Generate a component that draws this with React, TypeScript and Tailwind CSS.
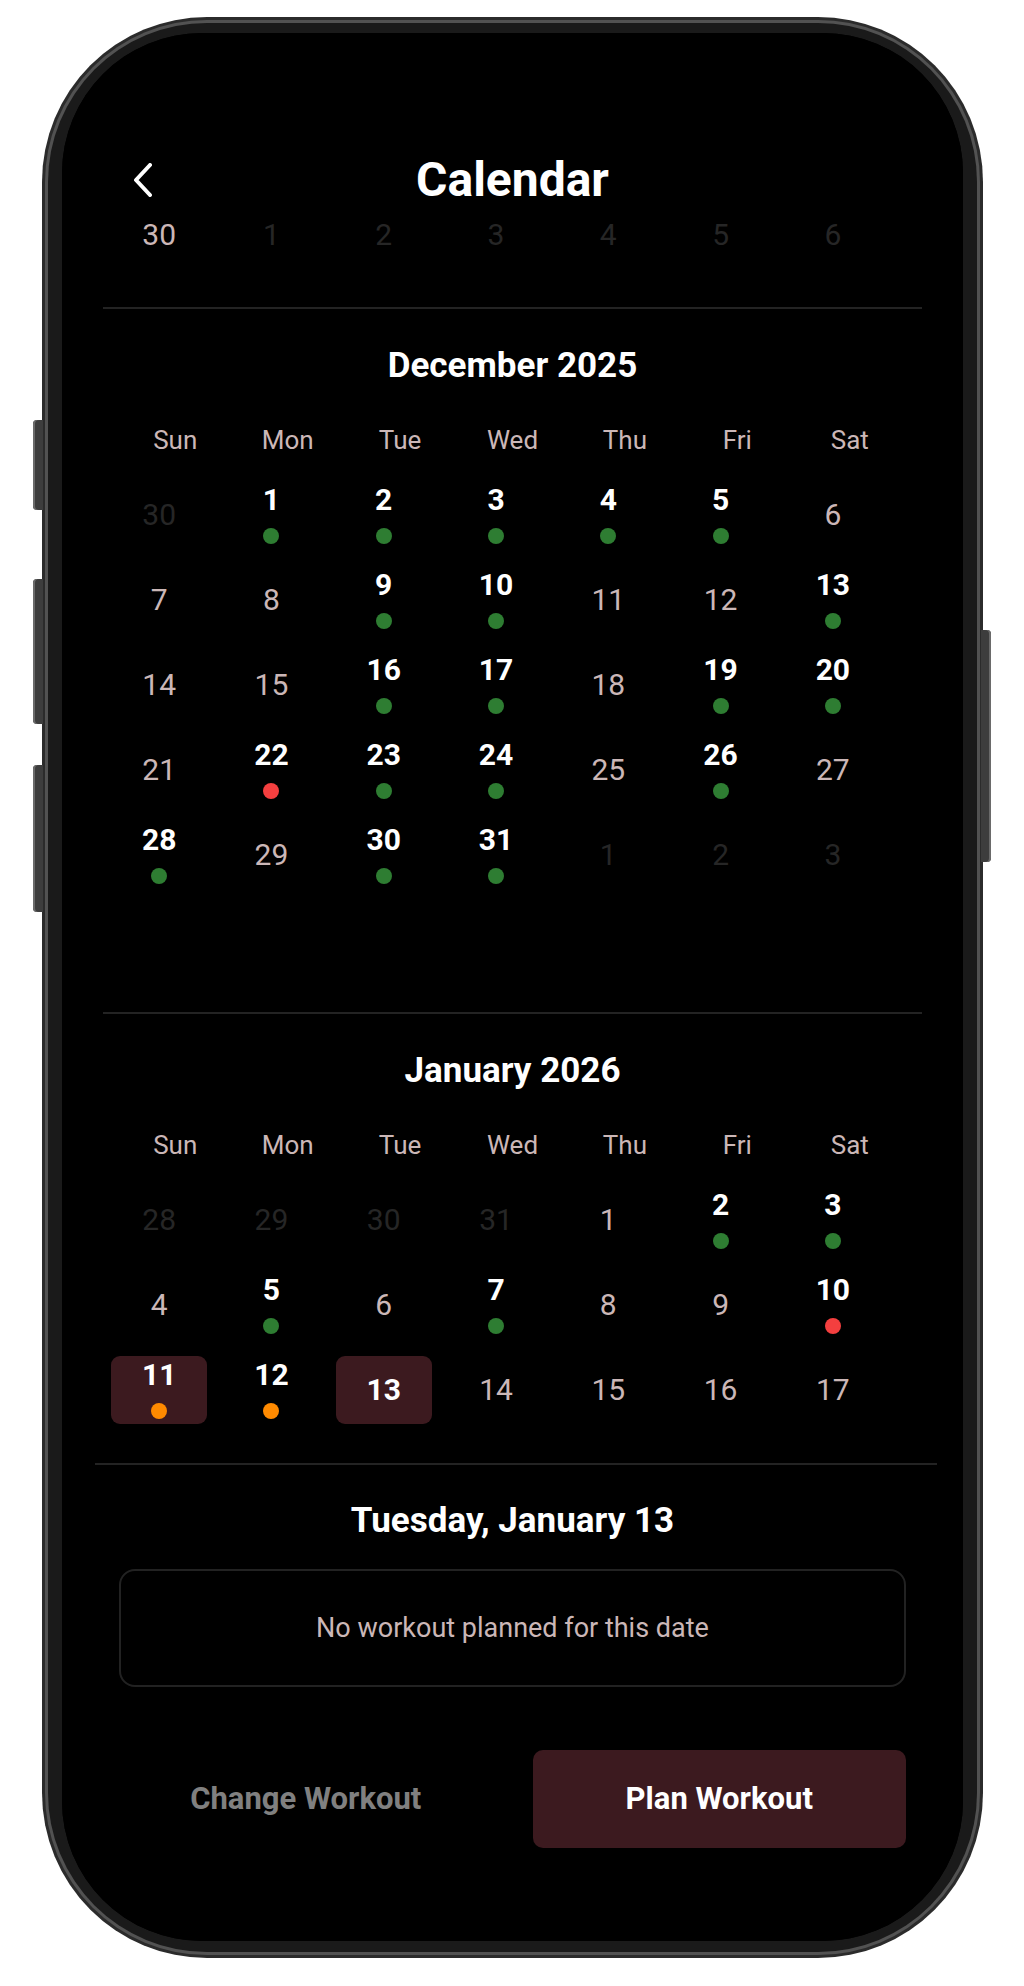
import React from 'react';

type Dot = 'green' | 'red' | 'orange';

interface DayCell {
    n: number;
    outside: boolean;
    dot?: Dot;
    boxed?: boolean;
    bold?: boolean;
}

interface MonthMarks {
    green?: number[];
    red?: number[];
    orange?: number[];
    boxed?: number[];
}

const MONTHS = ['January', 'February', 'March', 'April', 'May', 'June', 'July', 'August', 'September', 'October', 'November', 'December'];
const WEEKDAYS = ['Sun', 'Mon', 'Tue', 'Wed', 'Thu', 'Fri', 'Sat'];

const dotColor: Record<Dot, string> = {
    green: 'bg-[#2e7d32]',
    red: 'bg-[#f43f3f]',
    orange: 'bg-[#ff8a00]',
};

// builds the week rows for a month, padded with the neighbouring months' days
const buildMonth = (year: number, month: number, marks: MonthMarks): DayCell[][] => {
    const first = new Date(year, month, 1).getDay();
    const daysIn = new Date(year, month + 1, 0).getDate();
    const prevDays = new Date(year, month, 0).getDate();
    const cells: DayCell[] = [];

    for (let i = first - 1; i >= 0; i--) cells.push({ n: prevDays - i, outside: true });
    for (let d = 1; d <= daysIn; d++) {
        let dot: Dot | undefined;
        if (marks.green?.includes(d)) dot = 'green';
        if (marks.red?.includes(d)) dot = 'red';
        if (marks.orange?.includes(d)) dot = 'orange';
        const boxed = marks.boxed?.includes(d);
        cells.push({ n: d, outside: false, dot, boxed, bold: !!dot || boxed });
    }
    let next = 1;
    while (cells.length % 7 !== 0) cells.push({ n: next++, outside: true });

    const rows: DayCell[][] = [];
    for (let i = 0; i < cells.length; i += 7) rows.push(cells.slice(i, i + 7));
    return rows;
};

const Day: React.FC<{ day: DayCell }> = ({ day }) => {
    const numberClass = day.outside
        ? 'text-[#262626] font-normal'
        : day.bold
            ? 'text-white font-bold'
            : 'text-[#cbb7b7] font-normal';

    return (
        <div className="flex h-[85px] items-center justify-center">
            <div className={`flex flex-col items-center justify-center ${day.boxed ? 'h-[68px] w-[96px] rounded-[9px] bg-[#3c1a1f]' : ''}`}>
                <span className={`text-[30px] leading-[28px] ${numberClass}`}>{day.n}</span>
                {day.dot && <span className={`mt-[14px] h-4 w-4 rounded-full ${dotColor[day.dot]}`} />}
            </div>
        </div>
    );
};

const WeekRow: React.FC<{ row: DayCell[] }> = ({ row }) => (
    <div className="grid grid-cols-7">
        {row.map((d, j) => <Day key={j} day={d} />)}
    </div>
);

const MonthBlock: React.FC<{ year: number; month: number; marks: MonthMarks; maxRows?: number }> = ({ year, month, marks, maxRows = 6 }) => {
    const rows = buildMonth(year, month, marks).slice(0, maxRows);
    return (
        <section>
            <div className="h-[2px] bg-[#232323]" />
            <h2 className="pt-[36px] text-center text-[35px] font-bold leading-[42px] text-white">
                {MONTHS[month]} {year}
            </h2>
            <div className="mx-[16px] mt-[37px] grid grid-cols-7">
                {WEEKDAYS.map(w => (
                    <div key={w} className="text-center text-[26px] leading-[32px] text-[#cbb7b7]">{w}</div>
                ))}
            </div>
            <div className="mr-[33px] mt-[16px] h-[510px]">
                {rows.map((row, i) => <WeekRow key={i} row={row} />)}
            </div>
            <div className="h-[30px]" />
        </section>
    );
};

const App: React.FC = () => {
    // the list is scrolled: only November's last week is still in view
    const novemberTail = buildMonth(2025, 10, {}).slice(-1)[0];

    return (
        <div className="h-[1986px] w-[1024px] overflow-hidden bg-white pl-[42px] pt-[17px] font-['Roboto',sans-serif]">
            <div className="relative h-[1941px] w-[941px]">
                {/* side buttons */}
                <div className="absolute -left-[9px] top-[403px] h-[90px] w-[10px] rounded-l-[4px] bg-[#3d3d3d] shadow-[inset_2px_0_0_#6a6a6a]" />
                <div className="absolute -left-[9px] top-[562px] h-[145px] w-[10px] rounded-l-[4px] bg-[#3d3d3d] shadow-[inset_2px_0_0_#6a6a6a]" />
                <div className="absolute -left-[9px] top-[748px] h-[147px] w-[10px] rounded-l-[4px] bg-[#3d3d3d] shadow-[inset_2px_0_0_#6a6a6a]" />
                <div className="absolute -right-[8px] top-[613px] h-[232px] w-[10px] rounded-r-[4px] bg-[#3d3d3d] shadow-[inset_-2px_0_0_#6a6a6a]" />

                <div className="h-full rounded-[165px] bg-[#2b2b2b] p-[3px]">
                    <div className="h-full rounded-[162px] bg-[#525252] p-[3px]">
                        <div className="h-full rounded-[159px] bg-[#1a1a1a] px-[14px] pb-[11px] pt-[10px]">
                            <div className="relative flex h-full flex-col overflow-hidden rounded-[140px] bg-black">
                                <div className="absolute left-[356px] top-0 h-[5px] w-[186px] rounded-b-[4px] bg-[#1f1f1f]" />

                                {/* header */}
                                <header className="relative z-10 shrink-0 bg-black pb-[1px] pt-[119px]">
                                    <div className="flex h-[56px] items-center px-[70px]">
                                        <button type="button" className="w-[60px] shrink-0">
                                            <svg width="22" height="34" viewBox="0 0 22 34" fill="none">
                                                <polyline points="18,2 4,17 18,32" stroke="white" strokeWidth="4" strokeLinecap="round" strokeLinejoin="round" />
                                            </svg>
                                        </button>
                                        <h1 className="flex-1 text-center text-[48px] font-bold leading-[56px] text-white">Calendar</h1>
                                        <div className="w-[60px] shrink-0" />
                                    </div>
                                </header>

                                {/* scrolled month list */}
                                <div className="min-h-0 flex-1 overflow-hidden">
                                    <div className="-mt-[17px] px-[41px]">
                                        <div className="mr-[33px]">
                                            <WeekRow row={novemberTail} />
                                        </div>
                                        <div className="h-[30px]" />
                                        <MonthBlock
                                            year={2025}
                                            month={11}
                                            marks={{ green: [1, 2, 3, 4, 5, 9, 10, 13, 16, 17, 19, 20, 23, 24, 26, 28, 30, 31], red: [22] }}
                                        />
                                        <MonthBlock
                                            year={2026}
                                            month={0}
                                            maxRows={4}
                                            marks={{ green: [2, 3, 5, 7], red: [10], orange: [11, 12], boxed: [11, 13] }}
                                        />
                                    </div>
                                </div>

                                {/* selected day panel */}
                                <div className="relative z-10 shrink-0 bg-black pb-[93px]">
                                    <div className="ml-[33px] mr-[26px] h-[2px] bg-[#232323]" />
                                    <div className="px-[57px]">
                                        <h3 className="pt-[35px] text-center text-[35px] font-bold leading-[42px] text-white">Tuesday, January 13</h3>
                                        <div className="mt-[27px] flex h-[118px] items-center justify-center rounded-[16px] border-2 border-[#222222]">
                                            <span className="text-[27px] text-[#cbb7b7]">No workout planned for this date</span>
                                        </div>
                                        <div className="mt-[63px] grid grid-cols-2 gap-[40px]">
                                            <button type="button" className="h-[98px] rounded-[10px] text-[31px] font-bold text-[#808080]">
                                                Change Workout
                                            </button>
                                            <button type="button" className="h-[98px] rounded-[10px] bg-[#3c1a1f] text-[31px] font-bold text-white">
                                                Plan Workout
                                            </button>
                                        </div>
                                    </div>
                                </div>
                            </div>
                        </div>
                    </div>
                </div>
            </div>
        </div>
    );
};

export default App;
